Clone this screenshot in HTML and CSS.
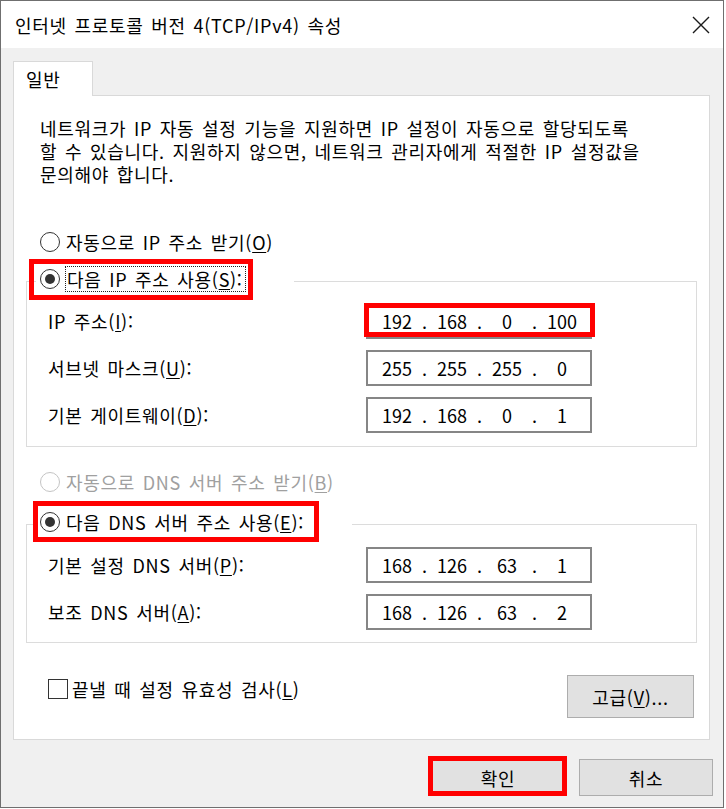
FILE: index.html
```html
<!DOCTYPE html>
<html lang="ko">
<head>
    <meta charset="UTF-8">
    <title>인터넷 프로토콜 버전 4(TCP/IPv4) 속성</title>
    <link rel="stylesheet" href="styles.css">
</head>
<body>
<div class="window">
    <div class="titlebar">
        <span class="title">인터넷 프로토콜 버전 4(TCP/IPv4) 속성</span>
        <svg class="close" width="18" height="18" viewBox="0 0 18 18">
            <path d="M1 1 L17 17 M17 1 L1 17" stroke="#1a1a1a" stroke-width="1.4" fill="none"/>
        </svg>
    </div>

    <div class="client">
        <div class="tabs">
            <div class="tab">일반</div>
        </div>

        <div class="panel">
            <p class="intro">네트워크가 IP 자동 설정 기능을 지원하면 IP 설정이 자동으로 할당되도록<br>할 수 있습니다. 지원하지 않으면, 네트워크 관리자에게 적절한 IP 설정값을<br>문의해야 합니다.</p>

            <div class="radio auto-ip">
                <span class="dot-box"></span>
                <span class="text">자동으로 IP 주소 받기(<u>O</u>)</span>
            </div>

            <fieldset class="group group-ip">
                <legend>
                    <div class="radio checked mark mark-ip">
                        <span class="dot-box"></span>
                        <span class="text focus">다음 IP 주소 사용(<u>S</u>):</span>
                    </div>
                </legend>
                <div class="row">
                    <span class="lbl">IP 주소(<u>I</u>):</span>
                    <div class="ip mark mark-field">
                        <span class="oct">192</span><span class="sep">.</span><span class="oct">168</span><span class="sep">.</span><span class="oct">0</span><span class="sep">.</span><span class="oct">100</span>
                    </div>
                </div>
                <div class="row">
                    <span class="lbl">서브넷 마스크(<u>U</u>):</span>
                    <div class="ip">
                        <span class="oct">255</span><span class="sep">.</span><span class="oct">255</span><span class="sep">.</span><span class="oct">255</span><span class="sep">.</span><span class="oct">0</span>
                    </div>
                </div>
                <div class="row">
                    <span class="lbl">기본 게이트웨이(<u>D</u>):</span>
                    <div class="ip">
                        <span class="oct">192</span><span class="sep">.</span><span class="oct">168</span><span class="sep">.</span><span class="oct">0</span><span class="sep">.</span><span class="oct">1</span>
                    </div>
                </div>
            </fieldset>

            <div class="radio disabled auto-dns">
                <span class="dot-box"></span>
                <span class="text">자동으로 DNS 서버 주소 받기(<u>B</u>)</span>
            </div>

            <fieldset class="group group-dns">
                <legend>
                    <div class="radio checked mark mark-dns">
                        <span class="dot-box"></span>
                        <span class="text">다음 DNS 서버 주소 사용(<u>E</u>):</span>
                    </div>
                </legend>
                <div class="row">
                    <span class="lbl">기본 설정 DNS 서버(<u>P</u>):</span>
                    <div class="ip">
                        <span class="oct">168</span><span class="sep">.</span><span class="oct">126</span><span class="sep">.</span><span class="oct">63</span><span class="sep">.</span><span class="oct">1</span>
                    </div>
                </div>
                <div class="row">
                    <span class="lbl">보조 DNS 서버(<u>A</u>):</span>
                    <div class="ip">
                        <span class="oct">168</span><span class="sep">.</span><span class="oct">126</span><span class="sep">.</span><span class="oct">63</span><span class="sep">.</span><span class="oct">2</span>
                    </div>
                </div>
            </fieldset>

            <div class="validate-row">
                <div class="check">
                    <span class="check-box"></span>
                    <span class="text">끝낼 때 설정 유효성 검사(<u>L</u>)</span>
                </div>
                <button class="btn btn-advanced">고급(<u>V</u>)...</button>
            </div>
        </div>

        <div class="buttons">
            <button class="btn btn-default mark mark-ok">확인</button>
            <button class="btn">취소</button>
        </div>
    </div>
</div>
</body>
</html>
```

FILE: styles.css
```css
* {
    box-sizing: border-box;
}

body {
    margin: 0;
    background-color: #ffffff;
    font-family: "Noto Sans CJK KR", "Noto Sans", sans-serif;
    font-size: 18px;
    letter-spacing: 0.7px;
    word-spacing: 2px;
    color: #000000;
}

u {
    text-decoration-thickness: 1px;
    text-underline-offset: 2px;
}

.window {
    width: 724px;
    height: 808px;
    border: 1px solid #6f6f6f;
    display: flex;
    flex-direction: column;
    background-color: #f0f0f0;
}

/* title bar */
.titlebar {
    height: 47px;
    flex: none;
    background-color: #ffffff;
    display: flex;
    align-items: center;
    justify-content: space-between;
    padding: 0 13px 0 14px;
}

.title {
    line-height: 26px;
}

.close {
    display: block;
}

/* tab + panel */
.client {
    flex: 1;
    display: flex;
    flex-direction: column;
}

.tabs {
    display: flex;
    padding: 13px 0 0 12px;
}

.tab {
    position: relative;
    z-index: 1;
    width: 80px;
    height: 35px;
    padding-left: 12px;
    display: flex;
    align-items: center;
    background-color: #ffffff;
    border: 1px solid #d9d9d9;
    border-bottom: none;
}

.panel {
    height: 645px;
    margin: -1px 13px 0 12px;
    background-color: #ffffff;
    border: 1px solid #d9d9d9;
}

.intro {
    margin: 21px 0 0 26px;
    line-height: 23px;
    white-space: nowrap;
}

/* radio buttons */
.radio {
    display: flex;
    align-items: center;
    height: 26px;
}

.radio .text {
    margin-left: 6px;
    line-height: 26px;
    white-space: nowrap;
}

.radio .text.focus {
    margin-left: 5px;
    padding: 0 2px 0 1px;
    line-height: 24px;
    border: 1px dotted #222;
}

.dot-box {
    width: 20px;
    height: 20px;
    border: 1.5px solid #333333;
    border-radius: 50%;
    display: flex;
    align-items: center;
    justify-content: center;
    flex: none;
}

.radio.checked .dot-box::after {
    content: "";
    width: 10px;
    height: 10px;
    border-radius: 50%;
    background-color: #333333;
}

.radio.disabled .dot-box {
    border-color: #c4c4c4;
}

.radio.disabled .text {
    color: #a0a0a0;
}

.auto-ip {
    margin: 43px 0 0 26px;
}

.auto-dns {
    margin: 22px 0 0 26px;
}

/* group boxes */
.group {
    margin: 0 12px;
    padding: 0 0 13px 0;
    border: 1px solid #dcdcdc;
    min-width: 0;
}

.group-ip {
    margin-top: 11px;
}

.group-dns {
    margin-top: 14px;
    padding-bottom: 12px;
}

.group legend {
    margin-left: 9px;
    padding: 0 48px 4px 4px;
}

.row {
    display: flex;
    align-items: center;
    height: 36px;
    padding-left: 21px;
    margin-top: 11px;
}

.group-ip .row:first-of-type {
    margin-top: 7px;
}

.group-dns .row:first-of-type {
    margin-top: 8px;
}

.lbl {
    width: 318px;
    white-space: nowrap;
}

.ip {
    width: 226px;
    height: 36px;
    border: 2px solid #868686;
    background-color: #ffffff;
    display: flex;
    align-items: center;
    padding-left: 7px;
    letter-spacing: 0;
}

.oct {
    width: 44px;
    text-align: center;
}

.sep {
    width: 11px;
    text-align: center;
}

/* red annotation boxes */
.mark {
    position: relative;
}

.mark::before {
    content: "";
    position: absolute;
    border: 5px solid #ff0000;
    pointer-events: none;
}

.mark-ip::before {
    top: -7px;
    bottom: -8px;
    left: -11px;
    right: -7px;
}

.mark-dns::before {
    top: -8px;
    bottom: -7px;
    left: -7px;
    right: -15px;
}

.mark-field::before {
    top: -2px;
    bottom: 0;
    left: -4px;
    right: -5px;
}

.mark-ok::before {
    top: -5px;
    bottom: -2px;
    left: -5px;
    right: -4px;
}

/* bottom of panel */
.validate-row {
    display: flex;
    justify-content: space-between;
    align-items: flex-start;
    margin-top: 32px;
    padding: 0 15px 0 34px;
}

.check {
    display: flex;
    align-items: center;
    height: 20px;
    margin-top: 4px;
}

.check-box {
    width: 20px;
    height: 20px;
    border: 1.5px solid #333333;
    flex: none;
}

.check .text {
    margin-left: 4px;
    white-space: nowrap;
}

.btn {
    font-family: inherit;
    font-size: 18px;
    letter-spacing: 0.7px;
    color: #000000;
    background-color: #e1e1e1;
    border: 1.5px solid #adadad;
    padding: 0;
    width: 134px;
    height: 37px;
}

.btn-advanced {
    width: 127px;
    height: 43px;
}

.btn-default {
    border: 2px solid #0078d7;
}

.buttons {
    display: flex;
    justify-content: flex-end;
    gap: 14px;
    margin-top: 19px;
    padding-right: 10px;
}
```
